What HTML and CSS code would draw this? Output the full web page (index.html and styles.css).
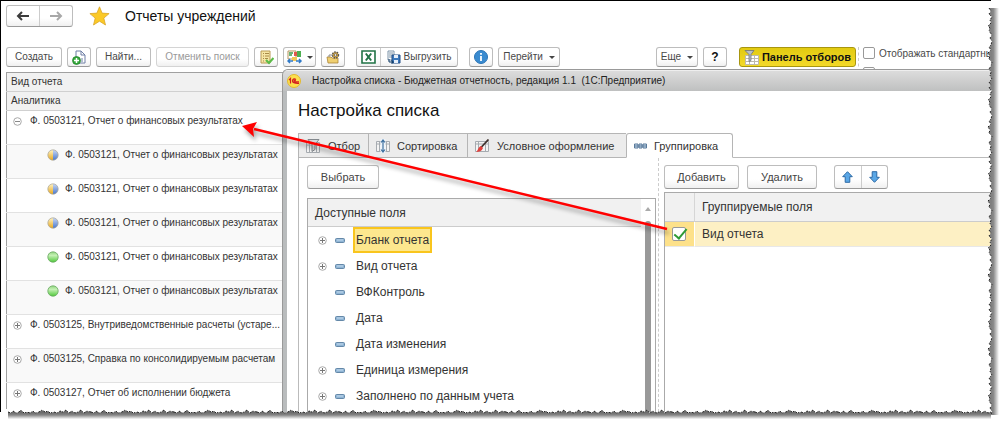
FILE: index.html
```html
<!DOCTYPE html>
<html lang="ru">
<head>
<meta charset="utf-8">
<title>Отчеты учреждений</title>
<link rel="stylesheet" href="styles.css">
</head>
<body>
<svg class="defs" aria-hidden="true">
  <defs>
    <symbol id="plus" viewBox="0 0 9 9"><circle cx="4.5" cy="4.5" r="3.8" fill="#fff" stroke="#a8a8a8"/><path d="M2 4.5h5M4.5 2v5" stroke="#777" fill="none"/></symbol>
    <symbol id="minus" viewBox="0 0 9 9"><circle cx="4.5" cy="4.5" r="3.8" fill="#fff" stroke="#a8a8a8"/><path d="M2 4.5h5" stroke="#888"/></symbol>
    <linearGradient id="gy" x2="0" y2="1"><stop offset="0" stop-color="#fff3c4"/><stop offset="1" stop-color="#e8a820"/></linearGradient>
    <linearGradient id="gb" x2="0" y2="1"><stop offset="0" stop-color="#c9d8f4"/><stop offset="1" stop-color="#4a78cc"/></linearGradient>
    <linearGradient id="gg" x2="0" y2="1"><stop offset="0" stop-color="#8fd67e"/><stop offset=".35" stop-color="#c4f0b4"/><stop offset="1" stop-color="#4fc93a"/></linearGradient>
    <symbol id="half" viewBox="0 0 12 12"><path d="M6 .8a5.2 5.2 0 0 0 0 10.4z" fill="url(#gy)"/><path d="M6 .8a5.2 5.2 0 0 1 0 10.4z" fill="url(#gb)"/><circle cx="6" cy="6" r="5.2" fill="none" stroke="#a9a596" stroke-width=".7"/></symbol>
    <symbol id="full" viewBox="0 0 12 12"><circle cx="6" cy="6" r="5.2" fill="url(#gg)" stroke="#6aa862" stroke-width=".8"/></symbol>
    <symbol id="dash" viewBox="0 0 10 5"><rect x=".5" y=".5" width="9" height="4" rx="1" fill="#8fb4d4" stroke="#6488a8"/><path d="M2 2h6" stroke="#c5dbee"/></symbol>
    <symbol id="grid" viewBox="0 0 14 12"><path d="M.5 1.5h13v10H.5zM.5 4h13M3.5 1.5v10M10.5 1.5v10" fill="#f4f4f4" stroke="#a6abb0"/></symbol>
    <pattern id="tear-y" width="12" height="74" patternUnits="userSpaceOnUse">
      <path d="M2 0L4 3 2 6 5 9 3 12 4 15 1 18 3 20 2 23 5 27 3 30 5 33 4 37 2 39 4 42 1 45 3 48 2 51 5 54 4 58 2 61 4 64 3 68 5 71 2 74H12V0z" fill="#fff"/>
      <path d="M2 0L4 3 2 6 5 9 3 12 4 15 1 18 3 20 2 23 5 27 3 30 5 33 4 37 2 39 4 42 1 45 3 48 2 51 5 54 4 58 2 61 4 64 3 68 5 71 2 74H12V0z" fill="url(#fade-x)"/>
      <path d="M2 0L4 3 2 6 5 9 3 12 4 15 1 18 3 20 2 23 5 27 3 30 5 33 4 37 2 39 4 42 1 45 3 48 2 51 5 54 4 58 2 61 4 64 3 68 5 71 2 74" fill="none" stroke="#222" stroke-dasharray="2 1 1 2"/>
    </pattern>
    <pattern id="tear-x" width="83" height="12" patternUnits="userSpaceOnUse">
      <path d="M0 3L3 4 5 2 8 4 11 3 13 1 16 4 19 3 22 4 25 2 27 4 31 3 34 1 37 3 40 2 42 4 46 3 49 4 52 2 55 3 58 1 61 4 64 2 67 4 70 3 73 1 76 4 79 2 83 3V12H0z" fill="#fff"/>
      <path d="M0 3L3 4 5 2 8 4 11 3 13 1 16 4 19 3 22 4 25 2 27 4 31 3 34 1 37 3 40 2 42 4 46 3 49 4 52 2 55 3 58 1 61 4 64 2 67 4 70 3 73 1 76 4 79 2 83 3V12H0z" fill="url(#fade-y)"/>
      <path d="M0 3L3 4 5 2 8 4 11 3 13 1 16 4 19 3 22 4 25 2 27 4 31 3 34 1 37 3 40 2 42 4 46 3 49 4 52 2 55 3 58 1 61 4 64 2 67 4 70 3 73 1 76 4 79 2 83 3" fill="none" stroke="#222" stroke-dasharray="2 1 1 2"/>
    </pattern>
    <linearGradient id="fade-x" gradientUnits="userSpaceOnUse" x1="0" x2="12" y1="0" y2="0"><stop offset=".4" stop-color="#808080"/><stop offset=".55" stop-color="#8c8c8c"/><stop offset="1" stop-color="#fff"/></linearGradient>
    <linearGradient id="fade-y" gradientUnits="userSpaceOnUse" x1="0" x2="0" y1="0" y2="12"><stop offset=".3" stop-color="#6c6c6c"/><stop offset=".5" stop-color="#858585"/><stop offset=".85" stop-color="#fff"/></linearGradient>
  </defs>
</svg>

<main class="sheet">
  <header class="head">
    <div class="group nav">
      <button type="button" aria-label="Назад"><svg width="14" height="10" viewBox="0 0 14 10"><path d="M6 1L2 5l4 4M2.5 5H13" fill="none" stroke="#3c3c3c" stroke-width="2"/></svg></button>
      <button type="button" aria-label="Вперед"><svg width="14" height="10" viewBox="0 0 14 10"><path d="M8 1l4 4-4 4M11.5 5H1" fill="none" stroke="#a8a8a8" stroke-width="2"/></svg></button>
    </div>
    <svg class="star" width="21" height="20" viewBox="0 0 21 20"><path d="M10.5.8l2.6 6.3 7 .5-5.3 4.5 1.7 6.9-6-3.8-6 3.8 1.7-6.9L.9 7.6l7-.5z" fill="#fbc926" stroke="#d9a62a" stroke-width=".8"/></svg>
    <h1>Отчеты учреждений</h1>
  </header>

  <div class="bar">
    <div class="bar-left">
      <button type="button" class="btn w-create">Создать</button>
      <button type="button" class="btn w-icon" aria-label="Скопировать"><svg width="15" height="15" viewBox="0 0 15 15"><path d="M4 1h5l4 4v8H4z" fill="#fff" stroke="#6f7fa5"/><path d="M9 1v4h4M10 12V8" fill="none" stroke="#6f7fa5"/><circle cx="4.5" cy="10.5" r="4" fill="#35a83a" stroke="#1d7c26" stroke-width=".7"/><path d="M4.5 8v5M2 10.5h5" stroke="#fff" stroke-width="1.5"/></svg></button>
      <button type="button" class="btn w-find">Найти...</button>
      <button type="button" class="btn w-cancel" disabled>Отменить поиск</button>
      <button type="button" class="btn w-icon" aria-label="Проверить"><svg width="15" height="15" viewBox="0 0 15 15"><path d="M2 1h9v12H2z" fill="#f6e6a5" stroke="#b99a55"/><path d="M4 3.5h1M6 3.5h4M4 6h1M6 6h4M4 8.5h1M6 8.5h3M4 11h1" stroke="#a98a48"/><path d="M7 10l3 3 4.5-5" fill="none" stroke="#5cbb48" stroke-width="2.2"/></svg></button>
      <button type="button" class="btn w-drop" aria-label="Обмен"><svg width="16" height="15" viewBox="0 0 16 15"><path d="M1 1h8v8H1z" fill="#fff" stroke="#b7955d"/><path d="M2 3h4M2 5h3" stroke="#3d9a48" stroke-width="1.5"/><path d="M7 2h3v4H7z" fill="#e2574c"/><path d="M10 1h4v6h-4z" fill="#4eae50"/><path d="M5 7h5v4H5z" fill="#f1c655"/><path d="M1 11h5M3 9l-2 2 2 2M9 11h5M12 9l2 2-2 2" fill="none" stroke="#2f79c7" stroke-width="1.5"/></svg><i class="caret"></i></button>
      <button type="button" class="btn w-icon" aria-label="Настройка"><svg width="15" height="14" viewBox="0 0 15 14"><path d="M1 7h4l1 1h6v5H2z" fill="#efcf70" stroke="#a9843a" stroke-width=".8"/><path d="M3 7V5h4" fill="none" stroke="#8a8a8a"/><circle cx="9.5" cy="5" r="3" fill="#dba93c" stroke="#555" stroke-width="1.4" stroke-dasharray="1.5 1"/><circle cx="9.5" cy="5" r="1.2" fill="#fff" stroke="#555" stroke-width=".7"/></svg></button>
      <div class="group export">
        <button type="button" aria-label="Excel"><svg width="15" height="14" viewBox="0 0 15 14"><path d="M1 1h13v12H1z" fill="#fff" stroke="#217346" stroke-width="1.6"/><path d="M4.8 3.5l5.4 7M10.2 3.5l-5.4 7" stroke="#217346" stroke-width="2"/></svg></button>
        <button type="button"><svg width="14" height="14" viewBox="0 0 14 14"><path d="M1 1h6v9H1z" fill="#fff" stroke="#7d93a8"/><path d="M2 3h4M2 5h4M2 7h3" stroke="#7d93a8"/><path d="M5 5h8v8H5z" fill="#3c79bd" stroke="#234e86"/><path d="M7 5h4v3H7zM7 10h4v3H7z" fill="#e6effa"/><path d="M2 9v3h4M4.5 10.5l2 1.5-2 1.5" fill="none" stroke="#123d66"/></svg>Выгрузить</button>
      </div>
      <button type="button" class="btn w-icon" aria-label="Сведения"><svg width="14" height="14" viewBox="0 0 14 14"><circle cx="7" cy="7" r="6.5" fill="#3a8bd0" stroke="#2c74b5"/><path d="M7 6v5M7 3v1.8" stroke="#fff" stroke-width="1.8"/></svg></button>
      <button type="button" class="btn w-go">Перейти<i class="caret"></i></button>
    </div>
    <div class="bar-right">
      <button type="button" class="btn w-more">Еще<i class="caret"></i></button>
      <button type="button" class="btn w-icon help">?</button>
      <button type="button" class="btn panel"><svg width="15" height="15" viewBox="0 0 15 15"><path d="M1.5 5.5h13v9h-13zM1.5 8.5h13M1.5 11.5h13M5.5 5.5v9M10.5 5.5v9" fill="#fff" stroke="#bdb9ad"/><path d="M1 .5h9L7 4.5v6l-2 1V4.5z" fill="#b9bec4" stroke="#6f757b" stroke-width=".8"/></svg>Панель отборов</button>
      <div class="options">
        <label><input type="checkbox">Отображать стандартны</label>
        <label><input type="checkbox" aria-label="Дополнительный отбор"></label>
      </div>
    </div>
  </div>

  <table class="reports">
    <thead><tr><th>Вид отчета</th></tr><tr><th>Аналитика</th></tr></thead>
    <tbody>
      <tr><td><div class="cell"><svg width="9" height="9"><use href="#minus"/></svg>Ф. 0503121, Отчет о финансовых результатах</div></td></tr>
      <tr><td><div class="cell sub"><svg width="12" height="12"><use href="#half"/></svg>Ф. 0503121, Отчет о финансовых результатах</div></td></tr>
      <tr><td><div class="cell sub"><svg width="12" height="12"><use href="#half"/></svg>Ф. 0503121, Отчет о финансовых результатах</div></td></tr>
      <tr><td><div class="cell sub"><svg width="12" height="12"><use href="#half"/></svg>Ф. 0503121, Отчет о финансовых результатах</div></td></tr>
      <tr><td><div class="cell sub"><svg width="12" height="12"><use href="#full"/></svg>Ф. 0503121, Отчет о финансовых результатах</div></td></tr>
      <tr><td><div class="cell sub"><svg width="12" height="12"><use href="#full"/></svg>Ф. 0503121, Отчет о финансовых результатах</div></td></tr>
      <tr><td><div class="cell"><svg width="9" height="9"><use href="#plus"/></svg>Ф. 0503125, Внутриведомственные расчеты (устаре...</div></td></tr>
      <tr><td><div class="cell"><svg width="9" height="9"><use href="#plus"/></svg>Ф. 0503125, Справка по консолидируемым расчетам</div></td></tr>
      <tr class="last"><td><div class="cell"><svg width="9" height="9"><use href="#plus"/></svg>Ф. 0503127, Отчет об исполнении бюджета</div></td></tr>
    </tbody>
  </table>

  <section class="dialog" role="dialog" aria-labelledby="dlg">
    <div class="caption">
      <svg width="14" height="14" viewBox="0 0 14 14"><circle cx="7" cy="7" r="6.5" fill="#fce04e" stroke="#e3b930"/><path d="M2 6l1.5-1.5V9.5M9 5.5C7 4 5.5 5.5 5.5 7S7 9.5 12 9.3M8.8 6.7c-1-.8-1.8-.2-1.8.5s1 .8 5 .7" fill="none" stroke="#d3201f" stroke-width="1.2"/></svg>
      <span>Настройка списка - Бюджетная отчетность, редакция 1.1&nbsp; (1С:Предприятие)</span>
    </div>
    <div class="body">
      <h2 id="dlg">Настройка списка</h2>
      <div class="tabs" role="tablist">
        <button type="button" role="tab" class="t1"><svg width="15" height="14" viewBox="0 0 15 14"><use href="#grid" width="14" height="12" y="2"/><path d="M2 .5h11L9 5.5v5l-3 2v-7z" fill="#d5d8db" stroke="#83888d"/></svg>Отбор</button>
        <button type="button" role="tab" class="t2"><svg width="14" height="14" viewBox="0 0 14 14"><use href="#grid" width="14" height="12" y="1"/><path d="M4.5 0h5v14h-5z" fill="#eef4fa"/><path d="M7 1v12M5 3.5L7 1l2 2.5M5 10.5L7 13l2-2.5" fill="none" stroke="#3d6f9f" stroke-width="1.2"/></svg>Сортировка</button>
        <button type="button" role="tab" class="t3"><svg width="15" height="14" viewBox="0 0 15 14"><use href="#grid" width="14" height="12" y="1"/><path d="M13.5.5L6 8.5" stroke="#40322e" stroke-width="1.8"/><path d="M6 7l2 2c-1 3-4 4-7 4 2-1 2-5 5-6z" fill="#e2403c"/></svg>Условное оформление</button>
        <button type="button" role="tab" class="t4" aria-selected="true"><svg width="13" height="6" viewBox="0 0 13 6"><path d="M.5 1h3.5v4H.5zM5 1h3v4H5zM9 1h3.5v4H9z" fill="#c8dcec" stroke="#58799a"/><path d="M1 3h11" stroke="#58799a"/></svg>Группировка</button>
      </div>
      <div class="panes">
        <div class="pane-left">
          <button type="button" class="btn big w-pick">Выбрать</button>
          <div class="fields">
            <div class="fields-main">
              <div class="fields-head">Доступные поля</div>
              <ul>
                <li><svg class="tog" width="9" height="9"><use href="#plus"/></svg><svg width="10" height="5"><use href="#dash"/></svg><span class="picked">Бланк отчета</span></li>
                <li><svg class="tog" width="9" height="9"><use href="#plus"/></svg><svg width="10" height="5"><use href="#dash"/></svg><span>Вид отчета</span></li>
                <li><i class="tog"></i><svg width="10" height="5"><use href="#dash"/></svg><span>ВФКонтроль</span></li>
                <li><i class="tog"></i><svg width="10" height="5"><use href="#dash"/></svg><span>Дата</span></li>
                <li><i class="tog"></i><svg width="10" height="5"><use href="#dash"/></svg><span>Дата изменения</span></li>
                <li><svg class="tog" width="9" height="9"><use href="#plus"/></svg><svg width="10" height="5"><use href="#dash"/></svg><span>Единица измерения</span></li>
                <li><svg class="tog" width="9" height="9"><use href="#plus"/></svg><svg width="10" height="5"><use href="#dash"/></svg><span>Заполнено по данным учета</span></li>
              </ul>
            </div>
            <div class="scroll"><svg width="6" height="4" viewBox="0 0 6 4"><path d="M0 4l3-4 3 4z" fill="#aaa"/></svg><div class="thumb"></div></div>
          </div>
        </div>
        <div class="pane-right">
          <div class="actions">
            <button type="button" class="btn big w-add">Добавить</button>
            <button type="button" class="btn big w-del">Удалить</button>
            <div class="group move">
              <button type="button" aria-label="Вверх"><svg width="11" height="12" viewBox="0 0 11 12"><path d="M5.5.7l4.8 5H7.8v5.6H3.2V5.7H.7z" fill="#5aa7e6" stroke="#2c69a5"/></svg></button>
              <button type="button" aria-label="Вниз"><svg width="11" height="12" viewBox="0 0 11 12"><path d="M5.5 11.3l4.8-5H7.8V.7H3.2v5.6H.7z" fill="#5aa7e6" stroke="#2c69a5"/></svg></button>
            </div>
          </div>
          <table class="grouping">
            <thead><tr><th class="tick"></th><th>Группируемые поля</th></tr></thead>
            <tbody><tr><td class="tick"><input type="checkbox" checked aria-labelledby="gf"></td><td id="gf">Вид отчета</td></tr></tbody>
          </table>
        </div>
      </div>
    </div>
  </section>

  <svg class="pointer" width="440" height="125" viewBox="0 0 440 125" aria-hidden="true">
    <g fill="none" stroke="#f00"><path d="M14 11L427 111" stroke-width="2.5"/><path d="M2 8l15-4-4 7 1 8z" fill="#f00" stroke="none"/></g>
  </svg>
</main>
<svg class="edge-right" aria-hidden="true"><rect width="12" height="100%" fill="url(#tear-y)"/></svg>
<svg class="edge-bottom" aria-hidden="true"><rect width="100%" height="12" fill="url(#tear-x)"/></svg>
</body>
</html>
```
FILE: styles.css
```css
* { box-sizing: border-box; }

body {
  position: relative;
  display: flex;
  min-height: 100vh;
  margin: 0;
  padding: 0 9px 9px 0;
  overflow: hidden;
  background: #fff;
  color: #333;
  font: 10px/14px "Liberation Sans", Arial, sans-serif;
}

button, input { font: inherit; color: inherit; margin: 0; }
svg { flex: none; display: block; }
h1, h2 { margin: 0; font-weight: normal; color: #111; }
.defs { position: absolute; width: 0; height: 0; }

.sheet {
  position: relative;
  flex: 1;
  min-width: 0;
  overflow: hidden;
  border-top: 1px solid #000;
  border-left: 1px solid #000;
}

/* header */
.head {
  display: flex;
  align-items: center;
  padding: 4px 5px 0;
}
.star { margin: 0 15px 0 16px; }
h1 { font-size: 14px; line-height: 22px; }

/* buttons */
.btn, .group {
  display: flex;
  flex: none;
  align-items: center;
  justify-content: center;
  height: 20px;
  padding: 0;
  border: 1px solid #bdbdbd;
  border-bottom-color: #999;
  border-radius: 3px;
  background: linear-gradient(#fff 60%, #f0f0f0);
  color: #484848;
  white-space: nowrap;
}
.btn:disabled { color: #9a9a9a; border-color: #d4d4d4; }
.group { align-items: stretch; }
.group button {
  display: flex;
  flex: 1 1 auto;
  align-items: center;
  justify-content: center;
  gap: 3px;
  padding: 0;
  border: 0;
  background: none;
}
.group button + button { border-left: 1px solid #ccc; }
.nav { width: 67px; height: 22px; }
.caret {
  margin-left: 6px;
  border: 3px solid transparent;
  border-top-color: #444;
  border-bottom: 0;
}

/* toolbar */
.bar {
  display: flex;
  justify-content: space-between;
  height: 45px;
  padding: 20px 0 0 5px;
}
.bar-left { display: flex; flex: none; gap: 5px; }
.bar-right { display: flex; flex: 0 0 335px; min-width: 0; gap: 5px; }
.w-create { width: 56px; }
.w-icon { width: 24px; }
.w-find { width: 55px; }
.w-cancel { width: 93px; }
.w-drop { width: 33px; }
.w-drop .caret { margin-left: 4px; }
.export { width: 102px; margin: 0 6px; }
.export button:first-child { flex: 0 0 23px; }
.w-go { width: 62px; }
.w-more { width: 42px; }
.help { color: #111; font-size: 12px; font-weight: bold; }
.panel {
  gap: 3px;
  width: 117px;
  margin-left: 7px;
  border-color: #a8960f;
  background: linear-gradient(#e2ca10, #f3d929);
  color: #111;
  font-size: 11px;
  font-weight: bold;
}
.options {
  display: flex;
  flex: none;
  flex-direction: column;
  gap: 6px;
  margin-left: -3px;
  padding-left: 4px;
  border-left: 1px dashed #ccc;
}
.options label { display: flex; gap: 4px; white-space: nowrap; color: #484848; }
.options input { width: 12px; height: 12px; }
input[type="checkbox"] {
  flex: none;
  appearance: none;
  border: 1px solid #999;
  border-radius: 2px;
  background: #fff;
}

/* report list */
.reports {
  width: 100%;
  margin-left: 5px;
  border-collapse: collapse;
  border: 1px solid #a0a0a0;
  border-bottom: 0;
  table-layout: fixed;
}
.reports th {
  height: 19px;
  padding: 0 4px;
  border-bottom: 1px solid #d0d0d0;
  background: #f1f1f1;
  font-weight: normal;
  text-align: left;
}
.reports td {
  height: 34px;
  padding: 2px 0 0 6px;
  border-bottom: 1px solid #e2e2e2;
  vertical-align: top;
}
.reports .last td { height: 26px; border-bottom: 0; }
.reports tbody tr:nth-child(even) { background: #f9f9f9; }
.cell { display: flex; align-items: center; gap: 8px; height: 16px; white-space: nowrap; }
.sub { padding-left: 34px; gap: 6px; }

/* settings window */
.dialog {
  position: absolute;
  top: 68px;
  right: 0;
  bottom: 0;
  left: 281px;
  display: flex;
  flex-direction: column;
  border: 1px solid #999;
  border-width: 1px 0 0 1px;
  border-radius: 6px 0 0 0;
  background: #b9bcbd;
  overflow: hidden;
}
.caption {
  display: flex;
  flex: none;
  align-items: center;
  gap: 11px;
  height: 21px;
  padding-left: 4px;
  border-top: 1px solid #eee;
  background: linear-gradient(#dcdcdc, #bfc0c0);
  color: #222;
  white-space: nowrap;
}
.body {
  display: flex;
  flex: 1;
  flex-direction: column;
  min-height: 0;
  margin-left: 4px;
  padding: 9px 0 0 11px;
  background: #fff;
  font-size: 12px;
}
h2 { font-size: 17px; line-height: 22px; }

.tabs {
  display: flex;
  margin-top: 11px;
  background: linear-gradient(#bbb, #bbb) bottom / 100% 1px no-repeat;
}
.tabs button {
  display: flex;
  align-items: center;
  gap: 7px;
  height: 25px;
  padding: 0 0 0 7px;
  border: 1px solid #b5b5b5;
  border-right-width: 0;
  background: #ececec;
  font-size: 11px;
  white-space: nowrap;
}
.tabs .t1 { width: 70px; }
.tabs .t2 { width: 99px; }
.tabs .t3 { width: 159px; }
.tabs .t4 {
  width: 107px;
  border-right-width: 1px;
  border-bottom-color: #fff;
  border-radius: 3px 3px 0 0;
  background: #fff;
}

.panes {
  display: flex;
  flex: 1;
  min-height: 0;
  border-left: 1px solid #bbb;
}
.pane-left {
  display: flex;
  flex: 0 0 360px;
  flex-direction: column;
  gap: 9px;
  padding: 7px 2px 0 8px;
  border-right: 1px dashed #ccc;
}
.big { height: 24px; color: #444; font-size: 11px; }
.w-pick { width: 72px; }
.w-add { width: 75px; }
.w-del { width: 70px; }
.fields {
  display: flex;
  flex: 1;
  min-height: 0;
  border: 1px solid #aaa;
  border-bottom: 0;
  overflow: hidden;
}
.fields-main { flex: 1; }
.fields-head {
  height: 28px;
  padding-left: 7px;
  border-bottom: 1px solid #ccc;
  background: #f1f1f1;
  line-height: 28px;
}
.fields ul { margin: 0; padding: 0; list-style: none; }
.fields li {
  display: flex;
  align-items: center;
  height: 26px;
  padding-left: 10px;
}
.tog { width: 9px; margin-right: 8px; }
.fields span { margin-left: 8px; padding: 4px 1px; border: 2px solid transparent; line-height: 14px; }
.fields .picked { border-color: #f9c51d; background: #fde78e; }
.scroll {
  display: flex;
  flex: 0 0 14px;
  flex-direction: column;
  align-items: center;
  gap: 10px;
  padding-top: 8px;
}
.thumb { flex: 1; width: 6px; border-radius: 3px 3px 0 0; background: #999; }

.pane-right {
  display: flex;
  flex: 1;
  flex-direction: column;
  min-width: 0;
  padding: 7px 0 0 5px;
}
.actions { display: flex; gap: 8px; }
.move { width: 54px; height: 24px; margin-left: 9px; }
.grouping {
  flex: 1;
  display: block;
  margin-top: 3px;
  border: 1px solid #aaa;
  border-width: 1px 0 0 1px;
}
.grouping thead, .grouping tbody { display: block; }
.grouping tr { display: flex; }
.grouping th, .grouping td {
  flex: 1;
  padding: 0 7px;
  font-weight: normal;
  text-align: left;
}
.grouping th { height: 29px; border-bottom: 1px solid #ccc; background: #f1f1f1; line-height: 28px; }
.grouping td { height: 25px; border-bottom: 1px solid #e8e8e8; background: #fdf0c4; line-height: 24px; }
.grouping .tick { display: flex; flex: 0 0 30px; align-items: center; border-right: 1px solid #d6d6d6; }
.grouping td.tick { background: #fde18a; border-right-color: #fff; }
.tick input { position: relative; width: 14px; height: 14px; }
.tick input::after {
  content: "";
  position: absolute;
  left: 4px;
  top: -2px;
  width: 5px;
  height: 11px;
  border: solid #2c9a36;
  border-width: 0 2px 2px 0;
  transform: rotate(40deg);
}

/* callout arrow over both windows */
.pointer {
  position: absolute;
  top: 117px;
  left: 239px;
  filter: drop-shadow(2px 4px 2px rgba(0, 0, 0, .35));
  pointer-events: none;
}

/* torn paper edges */
.edge-right { position: absolute; top: 8px; right: 1px; width: 12px; height: calc(100% - 14px); }
.edge-bottom { position: absolute; left: 8px; bottom: 0; width: calc(100% - 17px); height: 12px; }
```
